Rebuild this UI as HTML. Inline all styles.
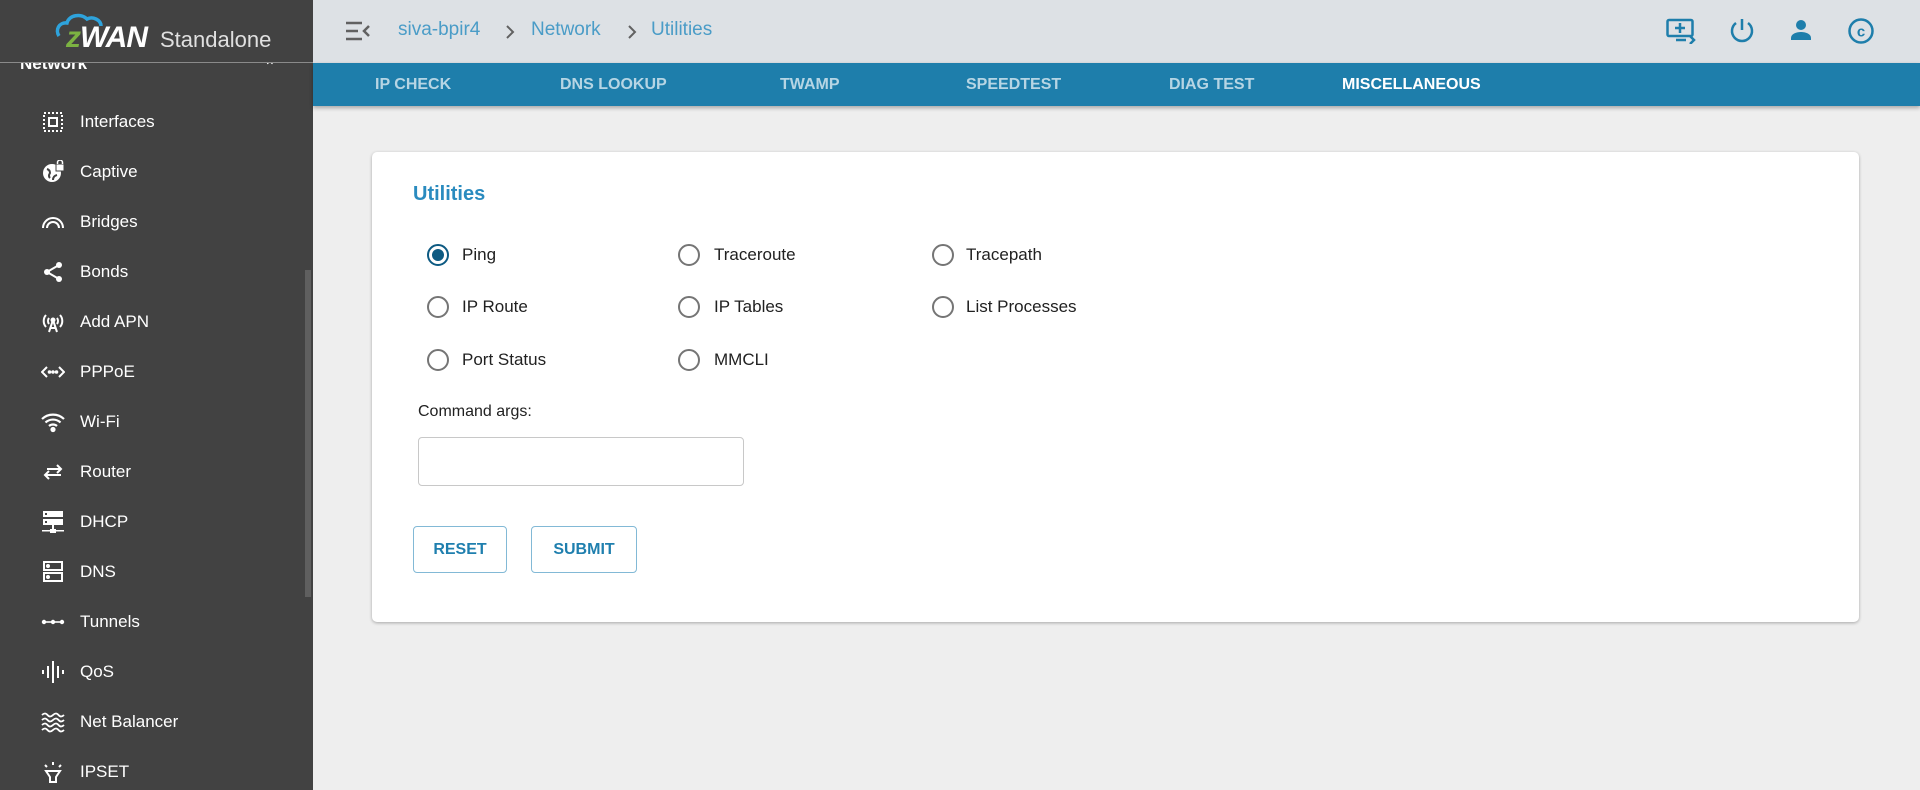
<!DOCTYPE html>
<html><head><meta charset="utf-8"><style>
*{box-sizing:border-box;margin:0;padding:0}
body{width:1920px;height:790px;overflow:hidden;background:#eeeeee;font-family:"Liberation Sans",Arial,sans-serif;position:relative}
.sb{position:absolute;left:0;top:0;width:313px;height:790px;background:#424242;overflow:hidden}
.abs{position:absolute}
.item{position:absolute;left:0;width:300px;height:40px;color:#fff;font-size:17px}
.item span{position:absolute;left:80px;top:50%;transform:translateY(-50%)}
.item svg{position:absolute;left:41px;top:8px}
.top{position:absolute;left:313px;top:0;width:1607px;height:63px;background:#dde1e5}
.tabs{position:absolute;left:313px;top:63px;width:1607px;height:43px;background:#1e7eab;box-shadow:0 2px 4px rgba(0,0,0,.3)}
.tab{position:absolute;top:13px;font-size:16px;font-weight:bold;color:rgba(255,255,255,.68)}
.bc{position:absolute;top:19px;font-size:19px;color:#4a9cc7}
.card{position:absolute;left:372px;top:152px;width:1487px;height:470px;background:#fff;border-radius:5px;box-shadow:0 1px 3px rgba(0,0,0,.3)}
.r{position:absolute;width:22px;height:22px;border:2px solid #757575;border-radius:50%}
.rl{position:absolute;font-size:17px;color:#212121}
.btn{position:absolute;top:526px;height:47px;border:1px solid #82b9d6;border-radius:4px;color:#1f7fae;font-size:16px;font-weight:bold;display:flex;align-items:center;justify-content:center}
</style></head><body>
<div class="sb">
 <div class="abs" style="left:20px;top:54px;font-size:17px;font-weight:bold;color:#fff">Network</div>
 <div class="abs" style="left:264px;top:58px;color:#fff;font-size:14px">⌃</div>
 <div class="abs" style="left:0;top:0;width:313px;height:63px;border-bottom:1px solid #8a8a8a;background:#424242;z-index:2">
  <svg class="abs" style="left:55px;top:12px" width="60" height="30" viewBox="0 0 60 30"><path d="M4 24 C0 18 4 10 12 11 C14 3 26 1 32 7 C38 4 46 8 46 14" fill="none" stroke="#2ea3dc" stroke-width="3.5"/></svg>
  <div class="abs" style="left:66px;top:21px;font-size:30px;font-weight:bold;font-style:italic;color:#fff;letter-spacing:-1px"><span style="color:#7cb342">z</span>WAN</div>
  <div class="abs" style="left:160px;top:27px;font-size:22px;color:#e0e0e0">Standalone</div>
 </div>
 <div class="abs" style="left:305px;top:270px;width:6px;height:327px;background:#5f5f5f"></div>

 <div class="item" style="top:102px"><svg width="24" height="24" viewBox="0 0 24 24" fill="none" stroke="#fff" stroke-width="2"><rect x="3" y="3" width="18" height="18" stroke-dasharray="2 2"/><rect x="8" y="8" width="8" height="8"/></svg><span>Interfaces</span></div>
 <div class="item" style="top:152px"><svg width="24" height="24" viewBox="0 0 24 24"><circle cx="11" cy="13" r="9" fill="#fff"/><path d="M6 9 q3 1 3 4 q-2 3 0 5 M12 20 q0-4 4-5" stroke="#424242" stroke-width="2" fill="none"/><rect x="15" y="4" width="8" height="7" fill="#fff" stroke="#424242"/><path d="M16.5 4 v-1.5 a2.5 2.5 0 0 1 5 0 v1.5" stroke="#fff" stroke-width="1.5" fill="none"/></svg><span>Captive</span></div>
 <div class="item" style="top:202px"><svg width="24" height="24" viewBox="0 0 24 24" fill="none" stroke="#fff" stroke-width="2"><path d="M2 18 a10 10 0 0 1 20 0 M6 18 a6 6 0 0 1 12 0"/></svg><span>Bridges</span></div>
 <div class="item" style="top:252px"><svg width="24" height="24" viewBox="0 0 24 24" fill="#fff"><circle cx="18" cy="5" r="3"/><circle cx="6" cy="12" r="3"/><circle cx="18" cy="19" r="3"/><path d="M6 12 L18 5 M6 12 L18 19" stroke="#fff" stroke-width="2"/></svg><span>Bonds</span></div>
 <div class="item" style="top:302px"><svg width="24" height="24" viewBox="0 0 24 24" fill="none" stroke="#fff" stroke-width="2"><path d="M5 5 a9 9 0 0 0 0 12 M19 5 a9 9 0 0 1 0 12 M8 8 a5 5 0 0 0 0 6 M16 8 a5 5 0 0 1 0 6 M12 10 L8 22 M12 10 L16 22 M9.5 18 h5"/><circle cx="12" cy="10" r="1.5" fill="#fff"/></svg><span>Add APN</span></div>
 <div class="item" style="top:352px"><svg width="24" height="24" viewBox="0 0 24 24" fill="none" stroke="#fff" stroke-width="2"><path d="M6 7 L1 12 L6 17 M18 7 L23 12 L18 17"/><circle cx="8.5" cy="12" r=".8" fill="#fff"/><circle cx="12" cy="12" r=".8" fill="#fff"/><circle cx="15.5" cy="12" r=".8" fill="#fff"/></svg><span>PPPoE</span></div>
 <div class="item" style="top:402px"><svg width="24" height="24" viewBox="0 0 24 24" fill="none" stroke="#fff" stroke-width="2.2"><path d="M1 9 a16 16 0 0 1 22 0 M4.5 12.5 a11 11 0 0 1 15 0 M8 16 a6 6 0 0 1 8 0"/><circle cx="12" cy="19.5" r="1.5" fill="#fff"/></svg><span>Wi-Fi</span></div>
 <div class="item" style="top:452px"><svg width="24" height="24" viewBox="0 0 24 24" fill="none" stroke="#fff" stroke-width="2"><path d="M4 15 h16 M8 11 l-4 4 l4 4 M20 9 h-14 M16 5 l4 4 l-4 4"/></svg><span>Router</span></div>
 <div class="item" style="top:502px"><svg width="24" height="24" viewBox="0 0 24 24" fill="#fff"><rect x="2" y="1" width="20" height="6"/><rect x="2" y="9" width="20" height="6"/><rect x="4" y="3" width="2" height="2" fill="#424242"/><rect x="4" y="11" width="2" height="2" fill="#424242"/><rect x="1" y="20" width="22" height="1.5"/><rect x="11" y="15" width="2" height="6"/><rect x="9" y="19" width="6" height="4"/></svg><span>DHCP</span></div>
 <div class="item" style="top:552px"><svg width="24" height="24" viewBox="0 0 24 24" fill="none" stroke="#fff" stroke-width="2"><rect x="3" y="2" width="18" height="8"/><rect x="3" y="13" width="18" height="8"/><circle cx="7" cy="6" r="1" fill="#fff"/><circle cx="7" cy="17" r="1" fill="#fff"/></svg><span>DNS</span></div>
 <div class="item" style="top:602px"><svg width="24" height="24" viewBox="0 0 24 24" fill="#fff"><circle cx="3" cy="12" r="2.2"/><circle cx="12" cy="12" r="2.2"/><circle cx="21" cy="12" r="2.2"/><rect x="3" y="11.2" width="18" height="1.6"/></svg><span>Tunnels</span></div>
 <div class="item" style="top:652px"><svg width="24" height="24" viewBox="0 0 24 24" fill="none" stroke="#fff" stroke-width="2"><path d="M2 10 v4 M7 6 v12 M12 1 v22 M17 6 v12 M22 10 v4"/></svg><span>QoS</span></div>
 <div class="item" style="top:702px"><svg width="24" height="24" viewBox="0 0 24 24" fill="none" stroke="#fff" stroke-width="1.8"><path d="M1 5 q3-3 5.5 0 t5.5 0 t5.5 0 t5.5 0 M1 10 q3-3 5.5 0 t5.5 0 t5.5 0 t5.5 0 M1 15 q3-3 5.5 0 t5.5 0 t5.5 0 t5.5 0 M1 20 q3-3 5.5 0 t5.5 0 t5.5 0 t5.5 0"/></svg><span>Net Balancer</span></div>
 <div class="item" style="top:752px"><svg width="24" height="24" viewBox="0 0 24 24" fill="none" stroke="#fff" stroke-width="2"><path d="M5 11 h14 l-4 6 v5 h-6 v-5 z M12 2 v3 M4 5 l2 2 M20 5 l-2 2"/></svg><span>IPSET</span></div>
</div>

<div class="top">
 <svg class="abs" style="left:32px;top:20px" width="26" height="22" viewBox="0 0 26 22" fill="none" stroke="#616161" stroke-width="2.5"><path d="M1 3 h16 M1 11 h12 M1 19 h16 M24 6 l-5 5 l5 5"/></svg>
 <div class="bc" style="left:85px">siva-bpir4</div>
 <svg class="abs" style="left:192px;top:25px" width="10" height="14" viewBox="0 0 10 14" fill="none" stroke="#616161" stroke-width="2"><path d="M2 1 l6 6 l-6 6"/></svg>
 <div class="bc" style="left:218px">Network</div>
 <svg class="abs" style="left:314px;top:25px" width="10" height="14" viewBox="0 0 10 14" fill="none" stroke="#616161" stroke-width="2"><path d="M2 1 l6 6 l-6 6"/></svg>
 <div class="bc" style="left:338px">Utilities</div>
 <svg class="abs" style="left:1353px;top:18px" width="32" height="26" viewBox="0 0 32 26" fill="none" stroke="#1e7eab" stroke-width="2.5"><rect x="1.5" y="2" width="25" height="16" rx="1.5"/><path d="M14 5 v10 M9 10 h10 M10 22 h10 M24 18 l4 4 l-4 4"/></svg>
 <svg class="abs" style="left:1415px;top:17px" width="28" height="28" viewBox="0 0 28 28" fill="none" stroke="#1e7eab" stroke-width="2.5"><path d="M14 2 v11 M8 6 a10 10 0 1 0 12 0"/></svg>
 <svg class="abs" style="left:1476px;top:18px" width="24" height="24" viewBox="0 0 24 24" fill="#1e7eab"><circle cx="12" cy="7" r="5"/><path d="M2 22 v-2 c0-4 5-6 10-6 s10 2 10 6 v2 z"/></svg>
 <svg class="abs" style="left:1534px;top:17px" width="28" height="28" viewBox="0 0 28 28"><circle cx="14" cy="14" r="11.5" fill="none" stroke="#1e7eab" stroke-width="2.5"/><text x="14" y="19.5" text-anchor="middle" font-family="Liberation Sans" font-weight="bold" font-size="15" fill="#1e7eab">c</text></svg>
</div>
<div class="tabs">
 <div class="tab" style="left:62px">IP CHECK</div>
 <div class="tab" style="left:247px">DNS LOOKUP</div>
 <div class="tab" style="left:467px">TWAMP</div>
 <div class="tab" style="left:653px">SPEEDTEST</div>
 <div class="tab" style="left:856px">DIAG TEST</div>
 <div class="tab" style="left:1029px;color:#fff">MISCELLANEOUS</div>
</div>

<div class="card"></div>
<div class="abs" style="left:413px;top:183px;font-size:20px;font-weight:bold;color:#2a8bbf">Utilities</div>
<div class="r" style="left:427px;top:244px;border-color:#0d5a82"><div style="position:absolute;left:3px;top:3px;width:12px;height:12px;border-radius:50%;background:#0d5a82"></div></div>
<div class="rl" style="left:462px;top:245px">Ping</div>
<div class="r" style="left:678px;top:244px"></div><div class="rl" style="left:714px;top:245px">Traceroute</div>
<div class="r" style="left:932px;top:244px"></div><div class="rl" style="left:966px;top:245px">Tracepath</div>
<div class="r" style="left:427px;top:296px"></div><div class="rl" style="left:462px;top:297px">IP Route</div>
<div class="r" style="left:678px;top:296px"></div><div class="rl" style="left:714px;top:297px">IP Tables</div>
<div class="r" style="left:932px;top:296px"></div><div class="rl" style="left:966px;top:297px">List Processes</div>
<div class="r" style="left:427px;top:349px"></div><div class="rl" style="left:462px;top:350px">Port Status</div>
<div class="r" style="left:678px;top:349px"></div><div class="rl" style="left:714px;top:350px">MMCLI</div>
<div class="rl" style="left:418px;top:403px;font-size:16px">Command args:</div>
<div class="abs" style="left:418px;top:437px;width:326px;height:49px;border:1px solid #c8c8c8;border-radius:4px;background:#fff"></div>
<div class="btn" style="left:413px;width:94px">RESET</div>
<div class="btn" style="left:531px;width:106px">SUBMIT</div>
</body></html>
